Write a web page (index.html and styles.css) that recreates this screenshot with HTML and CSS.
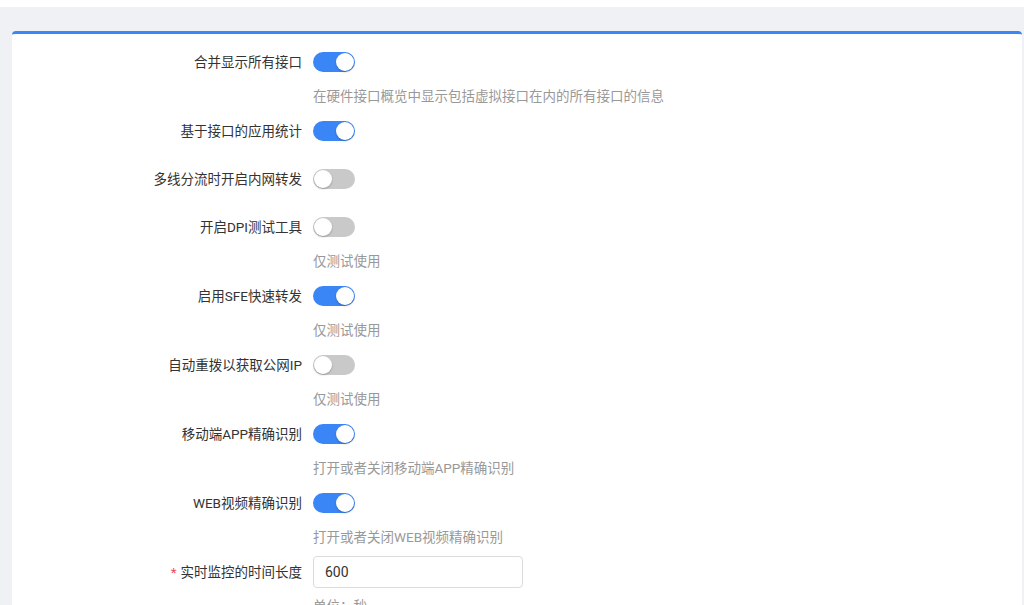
FILE: index.html
```html
<!DOCTYPE html>
<html>

<head>
    <title>系统设置</title>
    <link rel="stylesheet" href="styles.css">
</head>

<body>
    <div class="topbar"></div>

    <div class="page">
        <div class="card">
            <form class="settings">

                <div class="item has-help">
                    <label class="label">合并显示所有接口</label>
                    <div class="control">
                        <span class="switch on"></span>
                    </div>
                    <div class="help">在硬件接口概览中显示包括虚拟接口在内的所有接口的信息</div>
                </div>

                <div class="item">
                    <label class="label">基于接口的应用统计</label>
                    <div class="control">
                        <span class="switch on"></span>
                    </div>
                </div>

                <div class="item">
                    <label class="label">多线分流时开启内网转发</label>
                    <div class="control">
                        <span class="switch"></span>
                    </div>
                </div>

                <div class="item has-help">
                    <label class="label">开启DPI测试工具</label>
                    <div class="control">
                        <span class="switch"></span>
                    </div>
                    <div class="help">仅测试使用</div>
                </div>

                <div class="item has-help">
                    <label class="label">启用SFE快速转发</label>
                    <div class="control">
                        <span class="switch on"></span>
                    </div>
                    <div class="help">仅测试使用</div>
                </div>

                <div class="item has-help">
                    <label class="label">自动重拨以获取公网IP</label>
                    <div class="control">
                        <span class="switch"></span>
                    </div>
                    <div class="help">仅测试使用</div>
                </div>

                <div class="item has-help">
                    <label class="label">移动端APP精确识别</label>
                    <div class="control">
                        <span class="switch on"></span>
                    </div>
                    <div class="help">打开或者关闭移动端APP精确识别</div>
                </div>

                <div class="item has-help">
                    <label class="label">WEB视频精确识别</label>
                    <div class="control">
                        <span class="switch on"></span>
                    </div>
                    <div class="help">打开或者关闭WEB视频精确识别</div>
                </div>

                <div class="item has-help input-item">
                    <label class="label required">实时监控的时间长度</label>
                    <div class="control">
                        <input class="text-input" type="text" value="600">
                    </div>
                    <div class="help">单位：秒</div>
                </div>

            </form>
        </div>
    </div>
</body>

</html>
```

FILE: styles.css
```css
body {
    margin: 0;
    background-color: #f0f1f4;
    font-family: Roboto, "Noto Sans CJK SC", sans-serif;
    font-size: 13.5px;
    color: #333;
    overflow: hidden;
}

.topbar {
    height: 7px;
    background-color: #fff;
}

.page {
    padding: 24px 2px 0 12px;
}

.card {
    background-color: #fff;
    border-top: 3px solid #3b86f6;
    border-radius: 4px 4px 0 0;
    padding-top: 12px;
    min-height: 600px;
}

.settings {
    margin: 0;
}

/* one row of the form: label | control, help under the control */
.item {
    display: grid;
    grid-template-columns: 290px auto;
    column-gap: 11px;
    margin-bottom: 16px;
}

.item.has-help {
    margin-bottom: 8px;
}

.input-item {
    margin-top: 2px;
}

.label {
    text-align: right;
    line-height: 32px;
    height: 32px;
    white-space: nowrap;
    color: #333;
}

.label.required::before {
    content: "*";
    color: #f5475a;
    margin-right: 4px;
}

.control {
    display: flex;
    align-items: center;
    height: 32px;
}

.help {
    grid-column: 2;
    margin-top: 7px;
    line-height: 22px;
    color: #999;
}

/* switch */
.switch {
    position: relative;
    display: inline-block;
    width: 42px;
    height: 20px;
    border-radius: 10px;
    background-color: #c9c9c9;
}

.switch::after {
    content: "";
    position: absolute;
    top: 1px;
    left: 1px;
    width: 18px;
    height: 18px;
    border-radius: 50%;
    background-color: #fff;
    box-shadow: 0 1px 2px rgba(0, 0, 0, 0.25);
}

.switch.on {
    background-color: #3b86f6;
}

.switch.on::after {
    left: 23px;
}

.text-input {
    box-sizing: border-box;
    width: 210px;
    height: 32px;
    margin: 0;
    padding: 0 11px;
    border: 1px solid #dcdcdc;
    border-radius: 4px;
    font-family: inherit;
    font-size: 14px;
    color: #333;
    outline: none;
}
```
